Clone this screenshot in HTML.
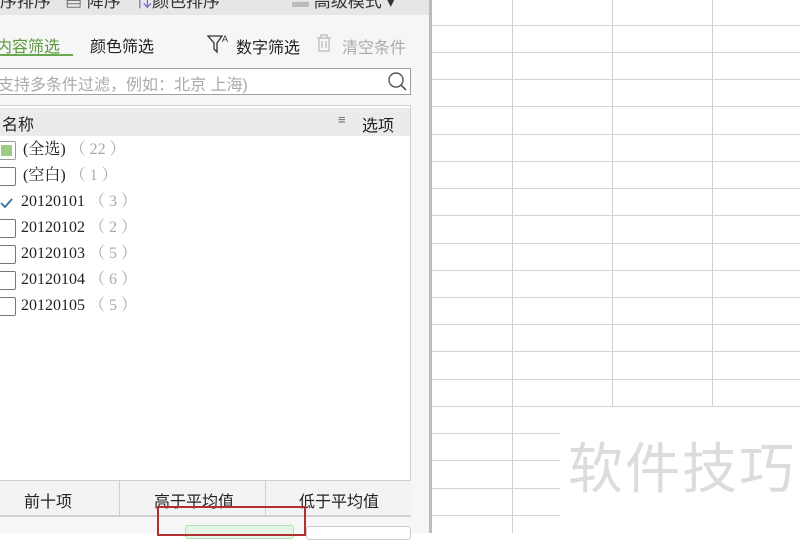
<!DOCTYPE html>
<html><head><meta charset="utf-8"><style>
*{margin:0;padding:0;box-sizing:border-box}
body{width:800px;height:533px;overflow:hidden;background:#fff;position:relative;font-family:"Liberation Sans","Noto Sans CJK SC",sans-serif;}
.a{position:absolute;white-space:nowrap}
.hl{position:absolute;left:432px;width:368px;height:1px;background:#d4d4d4}
.vl{position:absolute;width:1px;background:#d0d0d0;top:0}
.row{position:absolute;left:0;width:300px;height:22px;font-family:"Liberation Serif","Noto Serif CJK SC",serif;font-size:16px;color:#222;line-height:22px;white-space:nowrap}
.row span{white-space:nowrap}
.cb{position:absolute;left:-3px;top:2px;width:19px;height:19px;border:1px solid #777;border-radius:2px;background:#fff}
.cnt{color:#aaa}
</style></head><body>
<div class="a" style="left:429px;top:0;width:3px;height:533px;background:#bbb"></div>
<div class="vl" style="left:512px;height:533px"></div>
<div class="vl" style="left:612px;height:406px"></div>
<div class="vl" style="left:712px;height:406px"></div>
<div class="hl" style="top:25px"></div><div class="hl" style="top:52px"></div><div class="hl" style="top:79px"></div><div class="hl" style="top:106px"></div><div class="hl" style="top:134px"></div><div class="hl" style="top:161px"></div><div class="hl" style="top:188px"></div><div class="hl" style="top:215px"></div><div class="hl" style="top:243px"></div><div class="hl" style="top:270px"></div><div class="hl" style="top:297px"></div><div class="hl" style="top:324px"></div><div class="hl" style="top:351px"></div><div class="hl" style="top:379px"></div><div class="hl" style="top:406px"></div>
<div class="hl" style="top:433px;width:128px"></div><div class="hl" style="top:460px;width:128px"></div><div class="hl" style="top:488px;width:128px"></div><div class="hl" style="top:515px;width:128px"></div>
<div class="a" style="left:568px;top:424px;font-size:55px;color:#dcdcdc;letter-spacing:2px">软件技巧</div>
<div class="a" style="left:0;top:0;width:429px;height:533px;background:#f6f6f6"></div>
<div class="a" style="left:0;top:0;width:429px;height:15px;background:#e6e6e6;overflow:hidden">
<div class="a" style="left:0;top:-13px;font-size:17px;color:#333">序排序 &nbsp; ▤ 降序 &nbsp; <span style="color:#66c">⇅</span>颜色排序</div>
<div class="a" style="left:292px;top:-13px;font-size:17px;color:#333"><span style="color:#bbb">▬</span> 高级模式 ▾</div>
</div>
<div class="a" style="left:-4px;top:33px;font-size:16px;color:#5a9b3c">内容筛选</div>
<div class="a" style="left:0;top:54px;width:73px;height:2px;background:#6aa84f"></div>
<div class="a" style="left:90px;top:33px;font-size:16px;color:#222">颜色筛选</div>
<svg class="a" style="left:207px;top:33px" width="24" height="22" viewBox="0 0 24 22"><path d="M1 3H15L10 10V19L7 16V10Z" fill="none" stroke="#333" stroke-width="1.3"/><text x="15" y="9" font-size="9" fill="#333" font-family="Liberation Sans">A</text></svg>
<div class="a" style="left:236px;top:34px;font-size:16px;color:#222">数字筛选</div>
<svg class="a" style="left:314px;top:33px" width="20" height="20" viewBox="0 0 20 20"><path d="M3 5H17M7 5V2H13V5M5 5V18H15V5M8 8V15M12 8V15" fill="none" stroke="#bbb" stroke-width="1.3"/></svg>
<div class="a" style="left:342px;top:34px;font-size:16px;color:#aaa">清空条件</div>
<div class="a" style="left:-1px;top:68px;width:412px;height:27px;background:#fff;border:1px solid #a0a0a0"></div>
<div class="a" style="left:-2px;top:71px;font-size:16px;color:#aaa">支持多条件过滤，例如：北京 上海)</div>
<svg class="a" style="left:386px;top:71px" width="22" height="22" viewBox="0 0 22 22"><circle cx="10" cy="9" r="7" fill="none" stroke="#555" stroke-width="1.4"/><path d="M15 14L20 19" stroke="#555" stroke-width="1.6"/></svg>
<div class="a" style="left:-1px;top:105px;width:412px;height:412px;background:#fff;border:1px solid #d0d0d0"></div>
<div class="a" style="left:0;top:108px;width:410px;height:28px;background:#ebebeb"></div>
<div class="a" style="left:2px;top:111px;font-size:16px;color:#222">名称</div>
<div class="a" style="left:338px;top:112px;font-size:13px;color:#666">≡</div>
<div class="a" style="left:362px;top:112px;font-size:16px;color:#222">选项</div>
<div class="row" style="top:139px"><div class="cb" style="border-color:#999"><div style="position:absolute;left:3px;top:3px;width:11px;height:11px;background:#9ccc84"></div></div><span style="position:absolute;left:23px">(全选) <span class="cnt">（ 22 ）</span></span></div>
<div class="row" style="top:165px"><div class="cb"></div><span style="position:absolute;left:23px">(空白) <span class="cnt">（ 1 ）</span></span></div>
<div class="row" style="top:191px"><div class="cb" style="border-color:#fff"><svg width="17" height="17" style="position:absolute;left:0;top:0"><path d="M3 9L7 13L14 5" fill="none" stroke="#3a6ea5" stroke-width="1.8"/></svg></div><span style="position:absolute;left:21px">20120101 <span class="cnt">（ 3 ）</span></span></div>
<div class="row" style="top:217px"><div class="cb"></div><span style="position:absolute;left:21px">20120102 <span class="cnt">（ 2 ）</span></span></div>
<div class="row" style="top:243px"><div class="cb"></div><span style="position:absolute;left:21px">20120103 <span class="cnt">（ 5 ）</span></span></div>
<div class="row" style="top:269px"><div class="cb"></div><span style="position:absolute;left:21px">20120104 <span class="cnt">（ 6 ）</span></span></div>
<div class="row" style="top:295px"><div class="cb"></div><span style="position:absolute;left:21px">20120105 <span class="cnt">（ 5 ）</span></span></div>
<div class="a" style="left:0;top:480px;width:411px;height:36px;background:#f3f3f3;border-top:1px solid #d0d0d0;border-bottom:1px solid #d0d0d0"></div>
<div class="a" style="left:119px;top:481px;width:1px;height:34px;background:#d0d0d0"></div>
<div class="a" style="left:265px;top:481px;width:1px;height:34px;background:#d0d0d0"></div>
<div class="a" style="left:24px;top:488px;font-size:16px;color:#222">前十项</div>
<div class="a" style="left:154px;top:488px;font-size:16px;color:#222">高于平均值</div>
<div class="a" style="left:299px;top:488px;font-size:16px;color:#222">低于平均值</div>
<div class="a" style="left:185px;top:525px;width:109px;height:14px;background:#e4f5e4;border:1px solid #b6dcb6;border-radius:3px"></div>
<div class="a" style="left:306px;top:526px;width:105px;height:14px;background:#fff;border:1px solid #ccc;border-radius:3px"></div>
<div class="a" style="left:157px;top:506px;width:149px;height:30px;border:2px solid #b03030"></div>
</body></html>
